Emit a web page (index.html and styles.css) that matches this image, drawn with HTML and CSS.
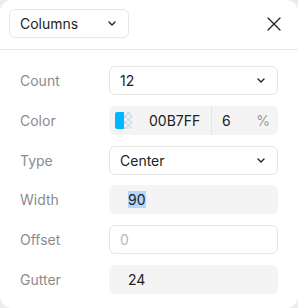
FILE: index.html
```html
<!DOCTYPE html>
<html>
<head>
<meta charset="utf-8">
<link rel="stylesheet" href="styles.css">
</head>
<body>
<div class="panel">
  <div class="header">
    <div class="select header-select">
      <span>Columns</span>
      <svg class="chev" width="8" height="5" viewBox="0 0 8 5"><path d="M1 1 L4 4 L7 1" fill="none" stroke="#222" stroke-width="1.4" stroke-linecap="round" stroke-linejoin="round"/></svg>
    </div>
    <svg class="close" width="14" height="14" viewBox="0 0 14 14"><path d="M1 1 L13 13 M13 1 L1 13" fill="none" stroke="#222" stroke-width="1.3" stroke-linecap="round"/></svg>
  </div>
  <div class="form">
    <div class="label">Count</div>
    <div class="field bordered select">
      <span>12</span>
      <svg class="chev" width="8" height="5" viewBox="0 0 8 5"><path d="M1 1 L4 4 L7 1" fill="none" stroke="#222" stroke-width="1.4" stroke-linecap="round" stroke-linejoin="round"/></svg>
    </div>

    <div class="label">Color</div>
    <div class="field filled color">
      <div class="swatch"><div class="swatch-solid"></div><div class="swatch-check"></div></div>
      <span class="hex">00B7FF</span>
      <div class="vdiv"></div>
      <span class="alpha">6</span>
      <span class="pct">%</span>
    </div>

    <div class="label">Type</div>
    <div class="field bordered select">
      <span>Center</span>
      <svg class="chev" width="8" height="5" viewBox="0 0 8 5"><path d="M1 1 L4 4 L7 1" fill="none" stroke="#222" stroke-width="1.4" stroke-linecap="round" stroke-linejoin="round"/></svg>
    </div>

    <div class="label">Width</div>
    <div class="field filled indent"><span class="sel">90</span></div>

    <div class="label">Offset</div>
    <div class="field bordered"><span class="placeholder">0</span></div>

    <div class="label">Gutter</div>
    <div class="field filled indent"><span>24</span></div>
  </div>
</div>
</body>
</html>
```
FILE: styles.css
```css
* { box-sizing: border-box; }
html, body { margin: 0; padding: 0; }
body {
  background: #ececec;
  font-family: Inter, "Noto Sans", sans-serif;
  font-size: 14px;
  color: #222;
}
.panel {
  width: 298px;
  height: 308px;
  background: #fff;
  border-radius: 12px;
  overflow: hidden;
}
.header {
  display: flex;
  align-items: center;
  justify-content: space-between;
  padding: 9px 17px 11px 9px;
  border-bottom: 1px solid #e9e9e9;
}
.select {
  display: flex;
  align-items: center;
  justify-content: space-between;
}
.header-select {
  width: 120px;
  height: 29px;
  border: 1px solid #e6e6e6;
  border-radius: 6px;
  padding: 0 12px 0 10px;
}
.chev { display: block; }
.close { display: block; }
.form {
  display: grid;
  grid-template-columns: 89px 169px;
  grid-auto-rows: 29px;
  row-gap: 10.8px;
  padding: 16px 0 0 20px;
  align-items: center;
}
.label {
  color: #8c8c8c;
}
.field {
  height: 29px;
  border-radius: 6px;
  display: flex;
  align-items: center;
  padding: 0 10px;
}
.bordered {
  border: 1px solid #e6e6e6;
  background: #fff;
  padding: 0 12px 0 10px;
}
.filled {
  background: #f4f4f4;
}
.indent { padding-left: 19px; }
.placeholder { color: #b9b9b9; }
.sel { background: #b3d7fe; }
.color { padding: 0 8px 0 6px; }
.swatch {
  width: 17px;
  height: 17px;
  display: flex;
  flex-shrink: 0;
  border-radius: 2px;
  overflow: hidden;
}
.swatch-solid { width: 9px; background: #00b7ff; }
.swatch-check {
  width: 8px;
  background-color: #eef1f3;
  background-image:
    linear-gradient(45deg, #cfdde5 25%, transparent 25%, transparent 75%, #cfdde5 75%),
    linear-gradient(45deg, #cfdde5 25%, transparent 25%, transparent 75%, #cfdde5 75%);
  background-size: 6px 6px;
  background-position: 0 0, 3px 3px;
}
.hex { margin-left: 17px; width: 62px; flex-shrink: 0; }
.vdiv {
  width: 1px;
  flex-shrink: 0;
  align-self: stretch;
  background: #e6e6e6;
}
.alpha { margin-left: 10px; flex: 1; }
.pct { color: #999; }
```
